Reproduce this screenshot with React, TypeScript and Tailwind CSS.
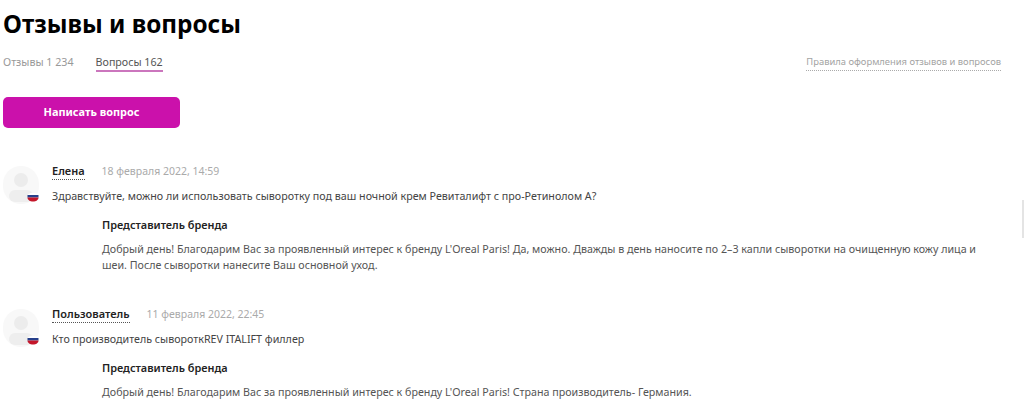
const comments = [
  {
    name: "Елена",
    date: "18 февраля 2022, 14:59",
    text: "Здравствуйте, можно ли использовать сыворотку под ваш ночной крем Ревиталифт с про-Ретинолом А?",
    answer: (
      <>
        Добрый день! Благодарим Вас за проявленный интерес к бренду L'Oreal Paris! Да, можно. Дважды в день наносите по 2–3 капли сыворотки на очищенную кожу лица и
        <br />
        шеи. После сыворотки нанесите Ваш основной уход.
      </>
    ),
  },
  {
    name: "Пользователь",
    date: "11 февраля 2022, 22:45",
    text: "Кто производитель сывороткREV ITALIFT филлер",
    answer: <>Добрый день! Благодарим Вас за проявленный интерес к бренду L'Oreal Paris! Страна производитель- Германия.</>,
  },
];

const Avatar = () => (
  <div className="relative w-[36px] h-[38px] shrink-0 mt-[3px]">
    <div className="w-full h-full rounded-full bg-[#f8f8f8] flex flex-col items-center overflow-hidden">
      <div className="w-[14px] h-[14px] rounded-full bg-[#ececec] mt-[7px]" />
      <div className="w-[24px] h-[12px] rounded-full bg-[#eeeeee] mt-[3px]" />
    </div>
    <svg className="absolute right-0 bottom-[2px]" width="12" height="10" viewBox="0 0 12 10">
      <path d="M1 3C1 1.5 3 1 6 1S11 1.5 11 3z" fill="#ffffff" />
      <path d="M0.5 3h11V5.5H0.5z" fill="#27408b" />
      <path d="M0.5 5.5h11C11.5 8 9 9.5 6 9.5S0.5 8 0.5 5.5z" fill="#c4162a" />
    </svg>
  </div>
);

export default function App() {
  return (
    <div className="relative w-[1024px] h-[420px] overflow-hidden bg-white pl-[3px] text-[#333] [font-family:'Noto_Sans','Open_Sans',sans-serif]">
      <h1 className="text-[24.3px] leading-[32px] font-bold text-black mt-[8px]">Отзывы и вопросы</h1>

      <div className="flex items-start justify-between mt-[14px] pr-[23px] text-[10.7px] leading-[16px]">
        <div className="flex gap-[22px]">
          <span className="text-[#999]">Отзывы 1 234</span>
          <span className="text-[#555] border-b-2 border-[#cb76bd]">Вопросы 162</span>
        </div>
        <span className="text-[#a3a3a3] text-[9.4px] border-b border-dotted border-[#aaa]">
          Правила оформления отзывов и вопросов
        </span>
      </div>

      <button className="block w-[177px] h-[31px] mt-[25px] rounded-[5px] bg-[#cb11ab] text-white text-[10.9px] font-bold">
        Написать вопрос
      </button>

      <div className="mt-[35px] flex flex-col gap-[33px]">
        {comments.map((c) => (
          <div key={c.name} className="flex gap-[13px]">
            <Avatar />
            <div className="flex-1">
              <div className="flex items-start gap-[17px] text-[10.5px] leading-[16px]">
                <span className="text-[11px] font-semibold text-[#222] border-b border-dotted border-[#555]">{c.name}</span>
                <span className="text-[#aaa]">{c.date}</span>
              </div>
              <p className="mt-[8px] text-[10.7px] leading-[16px] text-[#444]">{c.text}</p>
              <div className="ml-[50px] mt-[13px]">
                <p className="text-[10.9px] leading-[16px] font-semibold text-[#222]">Представитель бренда</p>
                <p className="mt-[8px] text-[10.7px] leading-[16px] text-[#555]">{c.answer}</p>
              </div>
            </div>
          </div>
        ))}
      </div>

      <div className="absolute right-0 top-[200px] w-[2px] h-[38px] bg-[#e4e4e4]" />
    </div>
  );
}
